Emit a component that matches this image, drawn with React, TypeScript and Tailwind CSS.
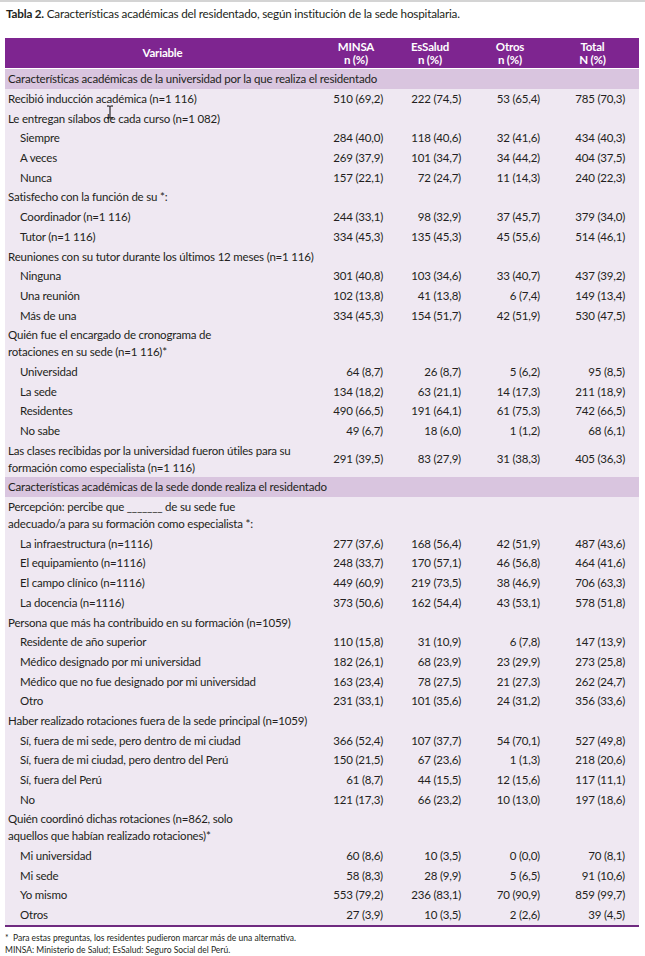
import React from "react";

type Row =
  | { kind: "section"; label: string }
  | { kind: "item"; label: React.ReactNode; sub?: boolean; tall?: boolean; v?: [string, string, string, string] };

const ROWS: Row[] = [
  { kind: "section", label: "Características académicas de la universidad por la que realiza el residentado" },
  { kind: "item", label: "Recibió inducción académica (n=1 116)", v: ["510 (69,2)", "222 (74,5)", "53 (65,4)", "785 (70,3)"] },
  { kind: "item", label: "Le entregan sílabos de cada curso (n=1 082)" },
  { kind: "item", sub: true, label: "Siempre", v: ["284 (40,0)", "118 (40,6)", "32 (41,6)", "434 (40,3)"] },
  { kind: "item", sub: true, label: "A veces", v: ["269 (37,9)", "101 (34,7)", "34 (44,2)", "404 (37,5)"] },
  { kind: "item", sub: true, label: "Nunca", v: ["157 (22,1)", "72 (24,7)", "11 (14,3)", "240 (22,3)"] },
  { kind: "item", label: "Satisfecho con la función de su *:" },
  { kind: "item", sub: true, label: "Coordinador (n=1 116)", v: ["244 (33,1)", "98 (32,9)", "37 (45,7)", "379 (34,0)"] },
  { kind: "item", sub: true, label: "Tutor (n=1 116)", v: ["334 (45,3)", "135 (45,3)", "45 (55,6)", "514 (46,1)"] },
  { kind: "item", label: "Reuniones con su tutor durante los últimos 12 meses (n=1 116)" },
  { kind: "item", sub: true, label: "Ninguna", v: ["301 (40,8)", "103 (34,6)", "33 (40,7)", "437 (39,2)"] },
  { kind: "item", sub: true, label: "Una reunión", v: ["102 (13,8)", "41 (13,8)", "6 (7,4)", "149 (13,4)"] },
  { kind: "item", sub: true, label: "Más de una", v: ["334 (45,3)", "154 (51,7)", "42 (51,9)", "530 (47,5)"] },
  { kind: "item", tall: true, label: <>Quién fue el encargado de cronograma de<br />rotaciones en su sede (n=1 116)*</> },
  { kind: "item", sub: true, label: "Universidad", v: ["64 (8,7)", "26 (8,7)", "5 (6,2)", "95 (8,5)"] },
  { kind: "item", sub: true, label: "La sede", v: ["134 (18,2)", "63 (21,1)", "14 (17,3)", "211 (18,9)"] },
  { kind: "item", sub: true, label: "Residentes", v: ["490 (66,5)", "191 (64,1)", "61 (75,3)", "742 (66,5)"] },
  { kind: "item", sub: true, label: "No sabe", v: ["49 (6,7)", "18 (6,0)", "1 (1,2)", "68 (6,1)"] },
  { kind: "item", tall: true, label: <>Las clases recibidas por la universidad fueron útiles para su<br />formación como especialista (n=1 116)</>, v: ["291 (39,5)", "83 (27,9)", "31 (38,3)", "405 (36,3)"] },
  { kind: "section", label: "Características académicas de la sede donde realiza el residentado" },
  { kind: "item", tall: true, label: <>Percepción: percibe que _______ de su sede fue<br />adecuado/a para su formación como especialista *:</> },
  { kind: "item", sub: true, label: "La infraestructura (n=1116)", v: ["277 (37,6)", "168 (56,4)", "42 (51,9)", "487 (43,6)"] },
  { kind: "item", sub: true, label: "El equipamiento (n=1116)", v: ["248 (33,7)", "170 (57,1)", "46 (56,8)", "464 (41,6)"] },
  { kind: "item", sub: true, label: "El campo clínico (n=1116)", v: ["449 (60,9)", "219 (73,5)", "38 (46,9)", "706 (63,3)"] },
  { kind: "item", sub: true, label: "La docencia (n=1116)", v: ["373 (50,6)", "162 (54,4)", "43 (53,1)", "578 (51,8)"] },
  { kind: "item", label: "Persona que más ha contribuido en su formación (n=1059)" },
  { kind: "item", sub: true, label: "Residente de año superior", v: ["110 (15,8)", "31 (10,9)", "6 (7,8)", "147 (13,9)"] },
  { kind: "item", sub: true, label: "Médico designado por mi universidad", v: ["182 (26,1)", "68 (23,9)", "23 (29,9)", "273 (25,8)"] },
  { kind: "item", sub: true, label: "Médico que no fue designado por mi universidad", v: ["163 (23,4)", "78 (27,5)", "21 (27,3)", "262 (24,7)"] },
  { kind: "item", sub: true, label: "Otro", v: ["231 (33,1)", "101 (35,6)", "24 (31,2)", "356 (33,6)"] },
  { kind: "item", label: "Haber realizado rotaciones fuera de la sede principal (n=1059)" },
  { kind: "item", sub: true, label: "Sí, fuera de mi sede, pero dentro de mi ciudad", v: ["366 (52,4)", "107 (37,7)", "54 (70,1)", "527 (49,8)"] },
  { kind: "item", sub: true, label: "Sí, fuera de mi ciudad, pero dentro del Perú", v: ["150 (21,5)", "67 (23,6)", "1 (1,3)", "218 (20,6)"] },
  { kind: "item", sub: true, label: "Sí, fuera del Perú", v: ["61 (8,7)", "44 (15,5)", "12 (15,6)", "117 (11,1)"] },
  { kind: "item", sub: true, label: "No", v: ["121 (17,3)", "66 (23,2)", "10 (13,0)", "197 (18,6)"] },
  { kind: "item", tall: true, label: <>Quién coordinó dichas rotaciones (n=862, solo<br />aquellos que habían realizado rotaciones)*</> },
  { kind: "item", sub: true, label: "Mi universidad", v: ["60 (8,6)", "10 (3,5)", "0 (0,0)", "70 (8,1)"] },
  { kind: "item", sub: true, label: "Mi sede", v: ["58 (8,3)", "28 (9,9)", "5 (6,5)", "91 (10,6)"] },
  { kind: "item", sub: true, label: "Yo mismo", v: ["553 (79,2)", "236 (83,1)", "70 (90,9)", "859 (99,7)"] },
  { kind: "item", sub: true, label: "Otros", v: ["27 (3,9)", "10 (3,5)", "2 (2,6)", "39 (4,5)"] },
];

const GRID = "grid grid-cols-[315px_72px_76px_84px_87px]";
const VAL_PAD = ["pr-[9px]", "pr-[7px]", "pr-[12px]", "pr-[14px]"];

export default function App() {
  return (
    <div className="relative w-[645px] h-[956px] bg-white border-t-2 border-[#d4d4d4] font-['Lato',sans-serif] text-[#231f20]">
      <p className="pl-[6px] pt-[4px] text-[11.7px] leading-[14px] tracking-[-0.2px]">
        <span className="font-bold">Tabla 2.</span> Características académicas del residentado, según institución de la sede hospitalaria.
      </p>

      <div className="mt-[18px] ml-[5px] w-[634px] bg-[#efe8f2] border-b-2 border-[#6f2a80] text-[11.5px] tracking-[-0.2px]">
        <div className={`${GRID} h-[31px] bg-[#7e2590] text-white font-bold leading-[13.5px] border-b border-white`}>
          <div className="flex items-center justify-center">Variable</div>
          <div className="flex flex-col items-center justify-center">
            <span>MINSA</span>
            <span>n (%)</span>
          </div>
          <div className="flex flex-col items-center justify-center">
            <span>EsSalud</span>
            <span>n (%)</span>
          </div>
          <div className="flex flex-col items-center justify-center">
            <span>Otros</span>
            <span>n (%)</span>
          </div>
          <div className="flex flex-col items-center justify-center pr-[6px]">
            <span>Total</span>
            <span>N (%)</span>
          </div>
        </div>

        {ROWS.map((r, i) =>
          r.kind === "section" ? (
            <div key={i} className="bg-[#d9c5df] pl-[3px] py-[1.35px] leading-[17px]">
              {r.label}
            </div>
          ) : (
            <div key={i} className={`${GRID} py-[1.35px] leading-[17px]`}>
              <div className={r.sub ? "pl-[15px]" : "pl-[3px]"}>{r.label}</div>
              {[0, 1, 2, 3].map((c) => (
                <div key={c} className={`flex items-center justify-end ${VAL_PAD[c]}`}>
                  {r.v ? r.v[c] : ""}
                </div>
              ))}
            </div>
          )
        )}
      </div>

      <div className="pl-[5px] pt-[5px] text-[8.5px] leading-[12px]">
        <p>*&nbsp; Para estas preguntas, los residentes pudieron marcar más de una alternativa.</p>
        <p>MINSA: Ministerio de Salud; EsSalud: Seguro Social del Perú.</p>
      </div>

      {/* text cursor captured in the screenshot */}
      <svg className="absolute left-[106px] top-[103px]" width="8" height="14" viewBox="0 0 8 14">
        <path d="M1 1h2.5L4 1.6 4.5 1H7M4 1.6v10.8M1 13h2.5l.5-.6.5.6H7" fill="none" stroke="#000" strokeWidth="1" />
      </svg>
    </div>
  );
}
